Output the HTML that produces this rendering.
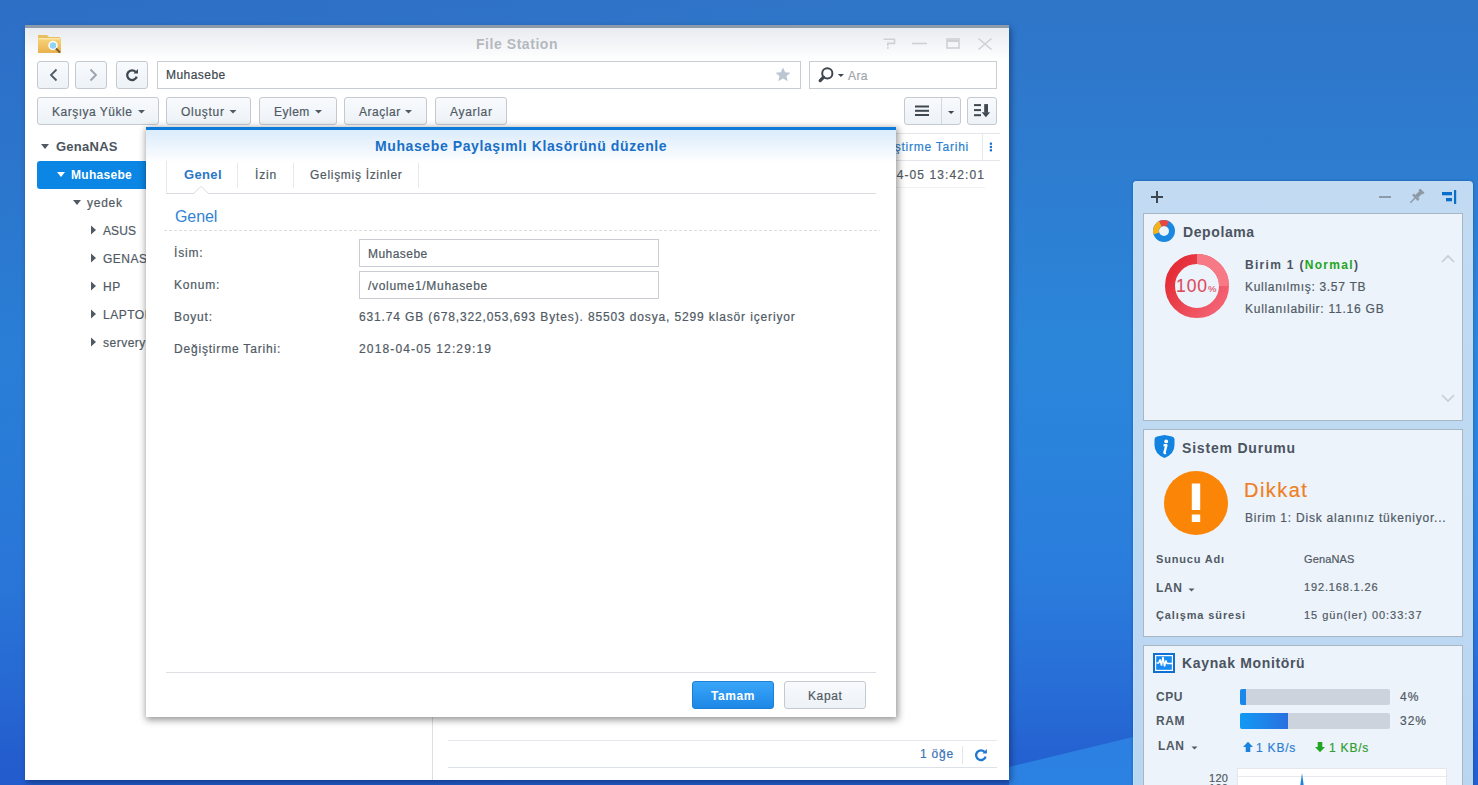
<!DOCTYPE html>
<html><head><meta charset="utf-8">
<style>
*{box-sizing:border-box;margin:0;padding:0}
html,body{width:1478px;height:785px;overflow:hidden}
body{position:relative;font-family:"Liberation Sans",sans-serif;color:#505a64;
background:linear-gradient(100deg,rgba(30,50,170,.10) 0%,rgba(30,50,170,0) 55%),linear-gradient(#2f75c8 0%,#2d7ed2 25%,#2b86da 45%,#2a82dc 60%,#2a7cdc 74%,#276cd6 89%,#2462d1 96%,#2360cf 100%)}
.a{position:absolute}
.t{position:absolute;white-space:nowrap;line-height:1;font-family:"Liberation Sans",sans-serif;-webkit-text-stroke:0.2px currentColor}
.b{-webkit-text-stroke:0}
.b{font-weight:700}
.btn{position:absolute;border:1px solid #c5cad1;border-radius:3px;background:linear-gradient(#f8fafd,#edf2f7)}
.inp{position:absolute;border:1px solid #c8ccd2;background:#fff}
.card{position:absolute;left:1143px;width:320px;background:#edf3fb;border:1px solid #a9b6c4}
</style></head><body>

<!-- light band -->
<div class="a" style="left:1009px;top:700px;width:191px;height:85px;background:linear-gradient(#2a7ee0,#2c82e2);clip-path:polygon(0 67px,124px 37px,191px 22px,191px 85px,0 85px)"></div>
<!-- main window -->
<div class="a" style="left:25px;top:25px;width:984px;height:755px;background:#fff;border-top:3px solid #8d9aa9;box-shadow:2px 3px 6px rgba(0,20,60,.45)"></div>
<div class="a" style="left:25px;top:28px;width:984px;height:32px;background:linear-gradient(#e8ebef,#ffffff)"></div>


<!-- title bar -->
<svg class="a" style="left:37px;top:34px" width="25" height="20" viewBox="0 0 25 20">
<defs><linearGradient id="fg" x1="0" y1="0" x2="0" y2="1"><stop offset="0" stop-color="#f7d47a"/><stop offset="1" stop-color="#e9b14f"/></linearGradient></defs>
<path d="M1 1h9l2 2h11v16H1z" fill="#e8bf5e"/><rect x="1" y="4" width="23" height="15" fill="url(#fg)"/><rect x="2" y="4" width="21" height="1.5" fill="#fbe6a8"/>
<circle cx="16" cy="11.5" r="4" fill="#8fd3f5" stroke="#fff" stroke-width="1.5"/><path d="M19 14.5l4 4" stroke="#7a5b2a" stroke-width="2"/>
</svg>
<div class="t b" style="left:476px;top:37px;font-size:14px;color:#b5b9bf;letter-spacing:0.55px">File Station</div>
<svg class="a" style="left:880px;top:36px" width="116" height="16" viewBox="0 0 116 16" fill="none" stroke="#cdd1d6" stroke-width="1.6">
<path d="M3.5 3.2H14.5V7.4H7.8V10"/><path d="M7.8 11v1.8"/>
<path d="M32 7.5h15"/>
<rect x="67" y="3" width="12" height="9"/><path d="M67 5h12" stroke-width="2"/>
<path d="M98.5 2.5l13 11M111.5 2.5l-13 11"/>
</svg>

<!-- toolbar row 1 -->
<div class="btn" style="left:37px;top:61px;width:32px;height:28px"></div>
<div class="btn" style="left:75px;top:61px;width:32px;height:28px"></div>
<div class="btn" style="left:116px;top:61px;width:32px;height:28px"></div>
<svg class="a" style="left:37px;top:61px" width="112" height="28" viewBox="0 0 112 28" fill="none" stroke-width="1.8">
<path d="M19.5 8.5l-5.5 5.5 5.5 5.5" stroke="#505a64"/>
<path d="M53.5 8.5l5.5 5.5-5.5 5.5" stroke="#9aa2ab"/>
<path d="M98.6 10.9A4.85 4.85 0 1 0 99.7 15.6" stroke="#3f4750" stroke-width="2.3"/><path d="M96.6 12.6H101V8z" fill="#3f4750" stroke="none"/>
</svg>
<div class="inp" style="left:157px;top:61px;width:644px;height:28px;border-color:#c8cdd3"></div>
<div class="t" style="left:166px;top:69px;font-size:12px;color:#404850;letter-spacing:0.45px">Muhasebe</div>
<svg class="a" style="left:775px;top:67px" width="16" height="15" viewBox="0 0 16 15"><path d="M8 0.5l2.2 4.8 5.2.5-3.9 3.4 1.2 5.1L8 11.6 3.3 14.3l1.2-5.1L.6 5.8l5.2-.5z" fill="#bcc6d2"/></svg>
<div class="inp" style="left:809px;top:61px;width:188px;height:28px;border-color:#c8cdd3"></div>
<svg class="a" style="left:817px;top:66px" width="30" height="18" viewBox="0 0 30 18"><circle cx="10.3" cy="7.4" r="5.1" fill="none" stroke="#3f4750" stroke-width="2"/><path d="M6.6 11.2L3.2 14.6" stroke="#3f4750" stroke-width="3.3" stroke-linecap="round"/><path d="M20.8 8h6.2l-3.1 3.1z" fill="#3f4750"/></svg>
<div class="t" style="left:848px;top:70px;font-size:12px;color:#9ea5ad;letter-spacing:0.4px">Ara</div>

<!-- toolbar row 2 -->
<div class="btn" style="left:37px;top:97px;width:122px;height:28px"></div>
<div class="t" style="left:52px;top:106px;font-size:12px;letter-spacing:0.5px">Karşıya Yükle</div>
<div class="btn" style="left:166px;top:97px;width:85px;height:28px"></div>
<div class="t" style="left:181px;top:106px;font-size:12px;letter-spacing:0.7px">Oluştur</div>
<div class="btn" style="left:259px;top:97px;width:78px;height:28px"></div>
<div class="t" style="left:274px;top:106px;font-size:12px;letter-spacing:0.5px">Eylem</div>
<div class="btn" style="left:344px;top:97px;width:83px;height:28px"></div>
<div class="t" style="left:359px;top:106px;font-size:12px;letter-spacing:0.55px">Araçlar</div>
<div class="btn" style="left:435px;top:97px;width:72px;height:28px"></div>
<div class="t" style="left:450px;top:106px;font-size:12px;letter-spacing:0.7px">Ayarlar</div>
<svg class="a" style="left:0;top:97px" width="440" height="28" viewBox="0 0 440 28" fill="#505a64">
<path d="M138 13h7l-3.5 3.5z"/><path d="M229.5 13h7l-3.5 3.5z"/><path d="M315 13h7l-3.5 3.5z"/><path d="M405 13h7l-3.5 3.5z"/>
</svg>
<div class="btn" style="left:904px;top:97px;width:57px;height:28px"></div>
<div class="a" style="left:941px;top:98px;width:1px;height:26px;background:#d3d9e0"></div>
<div class="btn" style="left:967px;top:97px;width:30px;height:28px"></div>
<svg class="a" style="left:904px;top:97px" width="94" height="28" viewBox="0 0 94 28" fill="#3f4750">
<rect x="11" y="8.5" width="14" height="2"/><rect x="11" y="12.8" width="14" height="2"/><rect x="11" y="17" width="14" height="2"/>
<path d="M44 14h6.2l-3.1 3.1z"/>
<rect x="70" y="7.1" width="7" height="2"/><rect x="70" y="12.1" width="7" height="2"/><rect x="70" y="17.2" width="7" height="2"/>
<rect x="80.2" y="7.1" width="3.8" height="8.5"/><path d="M77.7 15.2h8.4l-4.2 5z"/>
</svg>

<!-- tree pane -->
<div class="a" style="left:432px;top:130px;width:1px;height:650px;background:#dcdfe3"></div>
<svg class="a" style="left:40px;top:142px" width="10" height="10"><path d="M1 2h8l-4 5z" fill="#505a64"/></svg>
<div class="t b" style="left:56px;top:140px;font-size:13px;letter-spacing:0.25px;color:#4b545e">GenaNAS</div>
<div class="a" style="left:37px;top:161px;width:120px;height:28px;background:#0b86e5;border-radius:3px 0 0 3px"></div>
<svg class="a" style="left:56px;top:170px" width="10" height="10"><path d="M1 2h8l-4 5z" fill="#fff"/></svg>
<div class="t b" style="left:71px;top:169px;font-size:12px;letter-spacing:0.3px;color:#fff">Muhasebe</div>
<svg class="a" style="left:72px;top:198px" width="10" height="10"><path d="M1 2h8l-4 5z" fill="#505a64"/></svg>
<div class="t" style="left:87px;top:197px;font-size:12px;letter-spacing:0.75px">yedek</div>
<svg class="a" style="left:89px;top:225px" width="10" height="10"><path d="M2 0.5v9l5-4.5z" fill="#505a64"/></svg>
<div class="t" style="left:103px;top:225px;font-size:12px;letter-spacing:0.1px">ASUS</div>
<svg class="a" style="left:89px;top:253px" width="10" height="10"><path d="M2 0.5v9l5-4.5z" fill="#505a64"/></svg>
<div class="t" style="left:103px;top:253px;font-size:12px;letter-spacing:0.5px">GENASRV</div>
<svg class="a" style="left:89px;top:281px" width="10" height="10"><path d="M2 0.5v9l5-4.5z" fill="#505a64"/></svg>
<div class="t" style="left:103px;top:281px;font-size:12px;letter-spacing:0.5px">HP</div>
<svg class="a" style="left:89px;top:309px" width="10" height="10"><path d="M2 0.5v9l5-4.5z" fill="#505a64"/></svg>
<div class="t" style="left:103px;top:309px;font-size:12px;letter-spacing:0.5px">LAPTOP</div>
<svg class="a" style="left:89px;top:337px" width="10" height="10"><path d="M2 0.5v9l5-4.5z" fill="#505a64"/></svg>
<div class="t" style="left:103px;top:337px;font-size:12px;letter-spacing:0.5px">serveryedek</div>

<!-- grid -->
<div class="a" style="left:433px;top:133px;width:567px;height:1px;background:#e3e6ea"></div>
<div class="a" style="left:433px;top:160px;width:567px;height:1px;background:#e3e6ea"></div>
<div class="a" style="left:982px;top:134px;width:1px;height:26px;background:#e8ebee"></div>
<div class="t" style="right:509px;top:141px;font-size:12px;color:#2c7fd0;letter-spacing:0.75px">Değiştirme Tarihi</div>
<svg class="a" style="left:988px;top:141px" width="5" height="12"><rect x="1.8" y="1.6" width="2.2" height="2.2" fill="#1f6fcc"/><rect x="1.8" y="4.9" width="2.2" height="2.2" fill="#1f6fcc"/><rect x="1.8" y="8.2" width="2.2" height="2.2" fill="#1f6fcc"/></svg>
<div class="a" style="left:433px;top:187px;width:552px;height:1px;background:#eef0f2"></div>
<div class="t" style="right:493px;top:169px;font-size:12px;color:#505a64;letter-spacing:1.1px">2018-04-05 13:42:01</div>

<!-- status bar -->
<div class="a" style="left:448px;top:740px;width:549px;height:1px;background:#e4e7ec"></div>
<div class="a" style="left:448px;top:767px;width:549px;height:1px;background:#dde1e8"></div>
<div class="t" style="left:920px;top:748px;font-size:12px;color:#3a73b8;letter-spacing:0.8px">1 öğe</div>
<div class="a" style="left:962px;top:746px;width:1px;height:18px;background:#e2e5e9"></div>
<svg class="a" style="left:973px;top:746px" width="16" height="16" viewBox="0 0 16 16"><path d="M11.5 5.9A4.85 4.85 0 1 0 12.6 10.6" fill="none" stroke="#1f78d0" stroke-width="2.3"/><path d="M9.5 7.6H13.9V3z" fill="#1f78d0"/></svg>


<!-- dialog -->
<div class="a" style="left:146px;top:127px;width:750px;height:590px;background:#fff;border-top:3px solid #0d7ad9;box-shadow:1px 2px 7px 1px rgba(0,0,0,.42)"></div>
<div class="a" style="left:146px;top:130px;width:750px;height:33px;background:linear-gradient(#daebfb,#ffffff)"></div>
<div class="t b" style="left:375px;top:139px;font-size:14px;color:#1a6fc7;letter-spacing:0.6px">Muhasebe Paylaşımlı Klasörünü düzenle</div>
<!-- tabs -->
<div class="a" style="left:166px;top:161px;width:1px;height:32px;background:#e6e9ec"></div>
<div class="a" style="left:237px;top:163px;width:1px;height:25px;background:#e6e9ec"></div>
<div class="a" style="left:293px;top:163px;width:1px;height:25px;background:#e6e9ec"></div>
<div class="a" style="left:418px;top:163px;width:1px;height:25px;background:#e6e9ec"></div>
<div class="a" style="left:166px;top:193px;width:710px;height:1px;background:#d9dde2"></div>
<svg class="a" style="left:193px;top:186px" width="16" height="9"><path d="M0 8L8 0.5 16 8" fill="#fff" stroke="#d9dde2"/><rect x="0" y="8" width="16" height="1" fill="#fff"/></svg>
<div class="t b" style="left:184px;top:168px;font-size:13px;color:#2a77c6;letter-spacing:0.35px">Genel</div>
<div class="t" style="left:255px;top:169px;font-size:12px;letter-spacing:0.85px">İzin</div>
<div class="t" style="left:310px;top:169px;font-size:12px;letter-spacing:0.7px">Gelişmiş İzinler</div>
<!-- section -->
<div class="t" style="left:175px;top:209px;font-size:16px;color:#3283d4;letter-spacing:-0.1px;-webkit-text-stroke:0">Genel</div>
<div class="a" style="left:164px;top:230px;width:716px;height:1px;background:repeating-linear-gradient(90deg,#dadee3 0 3px,transparent 3px 5px)"></div>
<div class="t" style="left:174px;top:247px;font-size:12px;letter-spacing:0.8px">İsim:</div>
<div class="t" style="left:174px;top:279px;font-size:12px;letter-spacing:0.8px">Konum:</div>
<div class="t" style="left:174px;top:311px;font-size:12px;letter-spacing:0.8px">Boyut:</div>
<div class="t" style="left:174px;top:343px;font-size:12px;letter-spacing:0.81px">Değiştirme Tarihi:</div>
<div class="inp" style="left:359px;top:239px;width:300px;height:28px;border-color:#c9cdd3"></div>
<div class="inp" style="left:359px;top:271px;width:300px;height:28px;border-color:#c9cdd3"></div>
<div class="t" style="left:368px;top:248px;font-size:12px;letter-spacing:0.45px">Muhasebe</div>
<div class="t" style="left:368px;top:280px;font-size:12px;letter-spacing:0.7px">/volume1/Muhasebe</div>
<div class="t" style="left:359px;top:311px;font-size:12px;letter-spacing:0.86px">631.74 GB (678,322,053,693 Bytes). 85503 dosya, 5299 klasör içeriyor</div>
<div class="t" style="left:359px;top:343px;font-size:12px;letter-spacing:1.14px">2018-04-05 12:29:19</div>
<!-- footer -->
<div class="a" style="left:166px;top:672px;width:710px;height:1px;background:#dcdfe3"></div>
<div class="a" style="left:692px;top:681px;width:82px;height:28px;border-radius:3px;background:linear-gradient(#3aa6f9,#1d87e6);border:1px solid #1c7fd6"></div>
<div class="t b" style="left:711px;top:690px;font-size:12px;color:#fff;letter-spacing:0.6px">Tamam</div>
<div class="btn" style="left:784px;top:681px;width:82px;height:28px"></div>
<div class="t" style="left:808px;top:690px;font-size:12px;letter-spacing:0.6px">Kapat</div>


<!-- widget panel -->
<div class="a" style="left:1133px;top:181px;width:340px;height:620px;background:linear-gradient(#c2dbf3,#b9d6f1);border-radius:4px;box-shadow:inset 1px 0 0 #b9e2ff,0 0 3px rgba(0,30,80,.35)"></div>
<svg class="a" style="left:1150px;top:189px" width="310" height="16" viewBox="0 0 310 16">
<path d="M7 2v12M1 8h12" stroke="#3e4650" stroke-width="2"/>
<path d="M229 8h12" stroke="#7f8a96" stroke-width="1.6"/>
<g transform="rotate(45 266 8)" fill="#8e99a5"><rect x="263" y="-1" width="6" height="2.5"/><rect x="264" y="1" width="4" height="6"/><path d="M262 7h8v2.5H262z"/><path d="M265.3 9h1.4v7h-1.4z"/></g>
<rect x="292" y="3" width="10" height="3.3" fill="#0b6fc9"/><rect x="296" y="9" width="6" height="3.3" fill="#0b6fc9"/><rect x="304" y="1" width="2.2" height="14" fill="#0b6fc9"/>
</svg>

<!-- card 1 -->
<div class="card" style="top:213px;height:208px"></div>
<svg class="a" style="left:1152px;top:219px" width="24" height="24" viewBox="0 0 24 24">
<circle cx="12" cy="12" r="8" fill="none" stroke="#1a87e0" stroke-width="6"/>
<path d="M8.5 4.7A8 8 0 0 0 4.4 14.5" fill="none" stroke="#f6b21a" stroke-width="6"/>
<path d="M8.5 4.7A8 8 0 0 1 15.8 5" fill="none" stroke="#e84545" stroke-width="6"/>
</svg>
<div class="t b" style="left:1183px;top:225px;font-size:14px;letter-spacing:0.6px;color:#4b545f">Depolama</div>
<svg class="a" style="left:1164px;top:253px" width="66" height="66" viewBox="0 0 66 66">
<defs><linearGradient id="dg" x1="0" y1="0" x2="1" y2="0.7"><stop offset="0" stop-color="#e2262f"/><stop offset="1" stop-color="#f36070"/></linearGradient></defs>
<circle cx="33" cy="33" r="27" fill="none" stroke="url(#dg)" stroke-width="10"/>
<path d="M33 6A27 27 0 0 1 60 33" fill="none" stroke="#f77985" stroke-width="10"/>
</svg>
<div class="t" style="left:1176px;top:278px;font-size:17.5px;color:#dd4a5c;letter-spacing:0.9px;-webkit-text-stroke:0.1px currentColor">100<span style="font-size:9.5px;letter-spacing:0">%</span></div>
<div class="t b" style="left:1245px;top:259px;font-size:12px;letter-spacing:1.3px;color:#4b545f">Birim 1 (<span style="color:#22a622">Normal</span>)</div>
<div class="t" style="left:1245px;top:281px;font-size:12px;letter-spacing:0.7px">Kullanılmış: 3.57 TB</div>
<div class="t" style="left:1245px;top:303px;font-size:12px;letter-spacing:0.76px">Kullanılabilir: 11.16 GB</div>
<svg class="a" style="left:1440px;top:253px" width="16" height="150" viewBox="0 0 16 150" fill="none" stroke="#c5ced8" stroke-width="1.6">
<path d="M2 9l6-6 6 6"/><path d="M2 142l6 6 6-6"/>
</svg>

<!-- card 2 -->
<div class="card" style="top:429px;height:208px"></div>
<svg class="a" style="left:1154px;top:435px" width="21" height="24" viewBox="0 0 21 24">
<path d="M0.5 4.5Q0.5 2 3 1.5L10.5 0 18 1.5Q20.5 2 20.5 4.5V10Q20.5 19 10.5 23Q0.5 19 0.5 10z" fill="#1283e0"/>
<circle cx="12.2" cy="6.4" r="1.9" fill="#fff"/><path d="M9.6 10.2h2.8l-1.9 7.2q-.2 1 1.4.4" stroke="#fff" stroke-width="2.4" fill="none" stroke-linejoin="round"/>
</svg>
<div class="t b" style="left:1182px;top:441px;font-size:14px;letter-spacing:0.8px;color:#4b545f">Sistem Durumu</div>
<svg class="a" style="left:1163px;top:470px" width="66" height="66" viewBox="0 0 66 66">
<circle cx="33" cy="33" r="32" fill="#fb8507"/>
<rect x="28.8" y="13.5" width="8.4" height="26.5" fill="#fff"/><rect x="28.8" y="44.5" width="8.4" height="7.5" fill="#fff"/>
</svg>
<div class="t" style="left:1244px;top:480px;font-size:20px;color:#ef7f22;letter-spacing:1.45px">Dikkat</div>
<div class="t" style="left:1245px;top:512px;font-size:12px;letter-spacing:0.78px">Birim 1: Disk alanınız tükeniyor...</div>
<div class="t b" style="left:1156px;top:554px;font-size:11px;letter-spacing:0.83px">Sunucu Adı</div>
<div class="t" style="left:1304px;top:554px;font-size:11px;letter-spacing:0.14px">GenaNAS</div>
<div class="t b" style="left:1156px;top:582px;font-size:12px;letter-spacing:0.6px">LAN</div>
<svg class="a" style="left:1187px;top:585px" width="10" height="10"><path d="M1.5 3.5h6l-3 3z" fill="#505a64"/></svg>
<div class="t" style="left:1304px;top:582px;font-size:11px;letter-spacing:0.85px">192.168.1.26</div>
<div class="t b" style="left:1156px;top:610px;font-size:11px;letter-spacing:0.88px">Çalışma süresi</div>
<div class="t" style="left:1304px;top:610px;font-size:11px;letter-spacing:0.97px">15 gün(ler) 00:33:37</div>

<!-- card 3 -->
<div class="card" style="top:645px;height:160px"></div>
<svg class="a" style="left:1153px;top:653px" width="22" height="20" viewBox="0 0 22 20">
<rect x="0" y="0" width="22" height="20" fill="#1170cf"/><rect x="2.6" y="2.6" width="16.8" height="14.8" fill="#168af0" stroke="#fff" stroke-width="1.2"/>
<path d="M3.5 10h2.2l1.4-3.5 1.4 6 1.5-8.5 1.5 9.5 1.4-6 1.1 3h5" fill="none" stroke="#fff" stroke-width="1.5" stroke-linejoin="bevel"/>
</svg>
<div class="t b" style="left:1182px;top:656px;font-size:14px;letter-spacing:0.65px;color:#4b545f">Kaynak Monitörü</div>
<div class="t b" style="left:1156px;top:691px;font-size:12px;letter-spacing:0.6px">CPU</div>
<div class="a" style="left:1240px;top:689px;width:150px;height:16px;background:#ccd3dc;border-radius:2px"></div>
<div class="a" style="left:1240px;top:689px;width:6px;height:16px;background:#1a88ea;border-radius:2px 0 0 2px"></div>
<div class="t" style="left:1400px;top:691px;font-size:12px;letter-spacing:1.2px">4%</div>
<div class="t b" style="left:1156px;top:715px;font-size:12px;letter-spacing:0.6px">RAM</div>
<div class="a" style="left:1240px;top:713px;width:150px;height:16px;background:#ccd3dc;border-radius:2px"></div>
<div class="a" style="left:1240px;top:713px;width:48px;height:16px;background:linear-gradient(90deg,#119af5,#2a70e0);border-radius:2px 0 0 2px"></div>
<div class="t" style="left:1400px;top:715px;font-size:12px;letter-spacing:1.0px">32%</div>
<div class="t b" style="left:1158px;top:740px;font-size:12px;letter-spacing:0.6px">LAN</div>
<svg class="a" style="left:1190px;top:743px" width="10" height="10"><path d="M1.5 3.5h6l-3 3z" fill="#505a64"/></svg>
<svg class="a" style="left:1242px;top:741px" width="12" height="12"><path d="M6 0.8L11 6H8.3V11H3.7V6H1z" fill="#1b82de"/></svg>
<div class="t" style="left:1256px;top:742px;font-size:12px;color:#2b7fd2;letter-spacing:0.8px">1 KB/s</div>
<svg class="a" style="left:1314px;top:741px" width="12" height="12"><path d="M6 11.2L11 6H8.3V1H3.7V6H1z" fill="#22a522"/></svg>
<div class="t" style="left:1329px;top:742px;font-size:12px;color:#2e9e2e;letter-spacing:0.8px">1 KB/s</div>
<div class="a" style="left:1237px;top:768px;width:210px;height:30px;background:#fff;border:1px solid #e4e8ec"></div>
<div class="a" style="left:1238px;top:776px;width:208px;height:1px;background:#e6e9ed"></div>
<div class="t" style="left:1209px;top:773px;font-size:11px;letter-spacing:0.3px">120</div>
<div class="t" style="left:1209px;top:783px;font-size:11px;letter-spacing:0.3px">100</div>
<svg class="a" style="left:1296px;top:770px" width="12" height="16"><path d="M4.2 16L6 3 7.8 16z" fill="#1b82de"/></svg>

</body></html>
